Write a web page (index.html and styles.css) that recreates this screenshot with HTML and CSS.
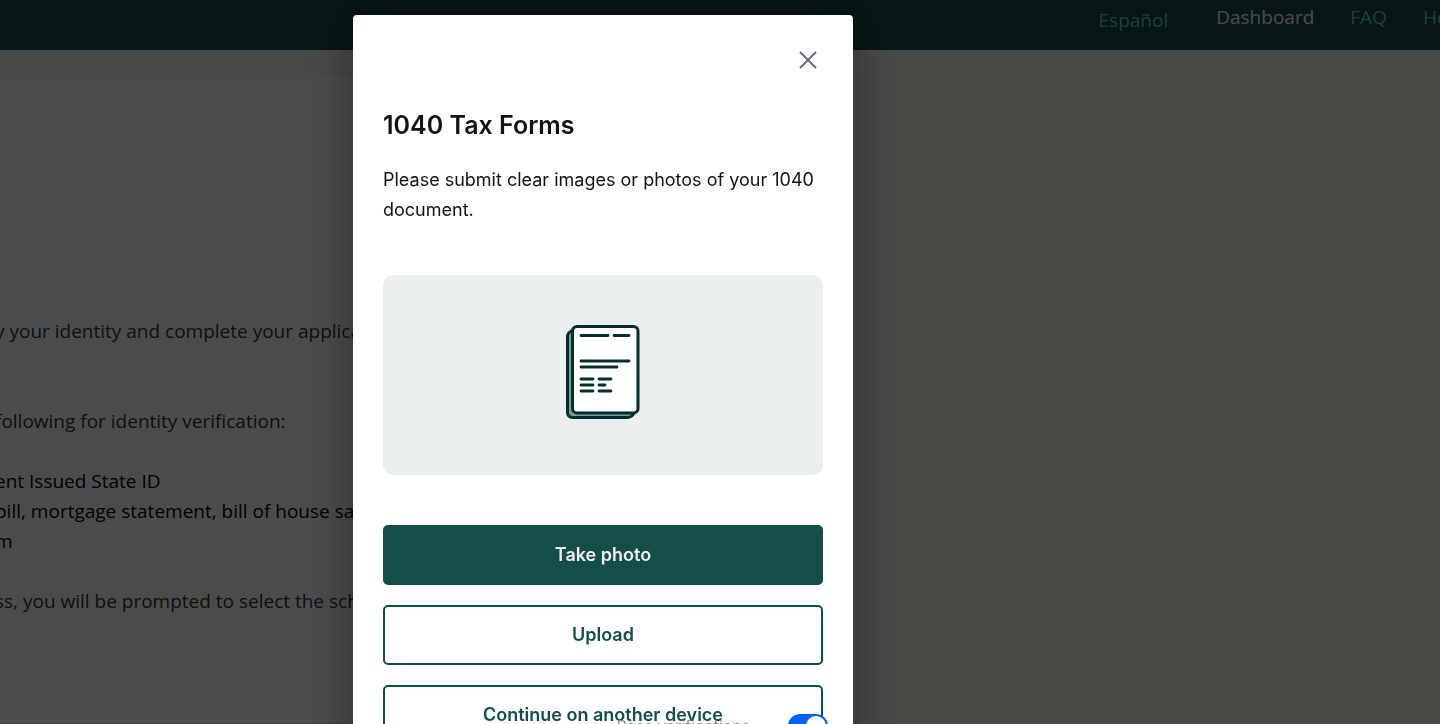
FILE: index.html
```html
<!DOCTYPE html>
<html lang="en">

<head>
    <meta charset="UTF-8">
    <meta name="viewport" content="width=device-width, initial-scale=1.0">
    <title>1040 Tax Forms</title>
    <link rel="stylesheet" href="styles.css">
</head>

<body>

    <header class="header">
        <nav class="nav">
            <a class="lang" href="#" lang="es">Español</a>
            <a class="active" href="#">Dashboard</a>
            <a href="#">FAQ</a>
            <a href="#">Help</a>
        </nav>
    </header>

    <main class="page">
        <section class="card">
            <p>y your identity and complete your application.</p>
            <p>following for identity verification:</p>
            <ul>
                <li>ent Issued State ID</li>
                <li>bill, mortgage statement, bill of house sale</li>
                <li>m</li>
            </ul>
            <p>ss, you will be prompted to select the school</p>
        </section>
    </main>

    <div class="overlay">
        <div class="modal" role="dialog" aria-labelledby="modalTitle">
            <button class="close" type="button" aria-label="Close">
                <svg width="20" height="20" viewBox="0 0 20 20" fill="none" stroke="#6a6985" stroke-width="2">
                    <path d="M2 2l16 16M18 2L2 18" />
                </svg>
            </button>
            <h1 id="modalTitle">1040 Tax Forms</h1>
            <p class="description">Please submit clear images or photos of your 1040 document.</p>

            <div class="preview">
                <svg width="74" height="100" viewBox="0 0 74 100" fill="none" stroke="#052e2b" stroke-width="3" stroke-linecap="round" stroke-linejoin="round">
                    <path d="M6 5.500Q1.500 7.500 1.500 12V87Q1.500 92.500 7 92.500H61Q66 92.500 68 88Z" fill="#7b9d9a" />
                    <rect x="6.500" y="1.500" width="65.500" height="86.500" rx="4.500" fill="#fff" />
                    <path d="M15 10.500h27M48 10.500h15M15 36h48M15 42h36M15 54h12M33 54h12M15 60h12M33 60h6M15 66h12M33 66h12" stroke-width="2.800" />
                </svg>
            </div>

            <div class="actions">
                <button class="btn btn-primary" type="button">Take photo</button>
                <button class="btn" type="button">Upload</button>
                <button class="btn" type="button">Continue on another device</button>
            </div>

            <div class="verify">
                <label for="passAll">Pass verifications</label>
                <input id="passAll" class="switch" type="checkbox" role="switch" checked>
            </div>
        </div>
    </div>

</body>

</html>
```

FILE: styles.css
```css
* {
    padding: 0;
    margin: 0;
    box-sizing: border-box;
}

body {
    height: 100vh;
    overflow: hidden;
    background-color: #f8f4ec;
    font-family: "Open Sans", "Noto Sans", sans-serif;
    font-size: 19px;
    line-height: 30px;
}

button {
    font-family: inherit;
    cursor: pointer;
}

.header {
    height: 50px;
    padding-top: 2px;
    background-color: #154d49;
}

.nav {
    display: flex;
    justify-content: flex-end;
    gap: 36px;
    margin-right: -24px;
}

.nav a {
    color: #72d4c8;
    text-decoration: none;
}

.nav .lang {
    padding-top: 3px;
    margin-right: 12px;
}

.nav .active {
    color: #fff;
}

.page {
    padding-top: 25px;
}

.card {
    width: 42%;
    padding: 241px 0 107px;
    margin-left: -5px;
    background-color: #fff;
    border-bottom: 1px solid #f3dfe8;
    color: #333;
    white-space: nowrap;
}

.card p {
    margin-bottom: 60px;
}

.card p + ul {
    margin: -30px 0 30px;
    list-style: none;
    color: #000;
}

.card p:last-child {
    margin-bottom: 0;
}

.overlay {
    position: fixed;
    inset: 0;
    display: grid;
    grid-template-columns: 353fr 500px 587fr;
    padding-top: 15px;
    background-color: rgba(0, 0, 0, 0.7);
    overflow: hidden;
}

.modal {
    grid-column: 2;
    align-self: start;
    position: relative;
    display: flex;
    flex-direction: column;
    padding: 30px 30px 60px;
    background-color: #fff;
    border-radius: 4px;
    box-shadow: 0 0 50px rgba(0, 0, 0, 0.4);
    color: #121314;
    font-family: Inter, "Liberation Sans", sans-serif;
    font-size: 18px;
}

.close {
    display: flex;
    align-self: flex-end;
    padding: 5px;
    background: none;
    border: none;
}

h1 {
    margin-top: 30px;
    font-size: 25px;
    font-weight: 600;
    line-height: 40px;
}

.description {
    margin: 20px 0 50px;
}

.preview {
    display: flex;
    justify-content: center;
    align-items: center;
    height: 200px;
    margin-bottom: 50px;
    background-color: #e9efee;
    border-radius: 10px;
}

.actions {
    display: flex;
    flex-direction: column;
    gap: 20px;
}

.btn {
    height: 60px;
    padding-bottom: 2px;
    background-color: #fff;
    border: 2px solid #154d49;
    border-radius: 5px;
    color: #154d49;
    font-size: 18px;
    font-weight: 600;
}

.btn-primary {
    background-color: #154d49;
    color: #f0f0f0;
}

/* floats over the last button */
.verify {
    position: absolute;
    top: 699px;
    right: 25px;
    display: flex;
    align-items: center;
    gap: 38px;
    color: #8a8a8a;
    font-size: 16px;
    line-height: 24px;
}

.switch {
    appearance: none;
    width: 40px;
    height: 24px;
    padding: 2px;
    background-color: #0061ff;
    border-radius: 12px;
}

.switch::before {
    content: "";
    display: block;
    width: 20px;
    height: 20px;
    margin-left: auto;
    background-color: #fff;
    border-radius: 50%;
}
```
